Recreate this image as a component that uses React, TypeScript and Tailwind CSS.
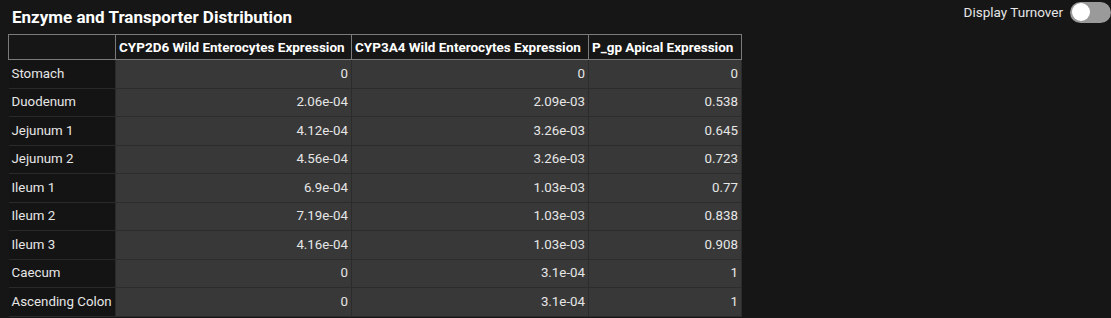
import React, { useState } from "react";

const rows = [
  ["Stomach", "0", "0", "0"],
  ["Duodenum", "2.06e-04", "2.09e-03", "0.538"],
  ["Jejunum 1", "4.12e-04", "3.26e-03", "0.645"],
  ["Jejunum 2", "4.56e-04", "3.26e-03", "0.723"],
  ["Ileum 1", "6.9e-04", "1.03e-03", "0.77"],
  ["Ileum 2", "7.19e-04", "1.03e-03", "0.838"],
  ["Ileum 3", "4.16e-04", "1.03e-03", "0.908"],
  ["Caecum", "0", "3.1e-04", "1"],
  ["Ascending Colon", "0", "3.1e-04", "1"],
];

export default function App() {
  const [turnover, setTurnover] = useState(false);

  return (
    <div
      className="w-[1111px] h-[318px] bg-[#161616] text-[#e6e6e6] overflow-hidden"
      style={{ fontFamily: "Roboto, 'Liberation Sans', sans-serif" }}
    >
      <div className="flex justify-between">
        <h2 className="pl-[12px] pt-[7px] text-[17px] leading-[20px] font-bold text-white">
          Enzyme and Transporter Distribution
        </h2>
        <label className="flex items-center gap-[7px] pt-[2px] h-[22px] text-[13.5px] text-[#e6e6e6]">
          Display Turnover
          <button
            onClick={() => setTurnover(!turnover)}
            className={`w-[41px] h-[21px] rounded-full flex items-center px-[2px] ${
              turnover ? "bg-[#3b82f6] justify-end" : "bg-[#9a9a9a] justify-start"
            }`}
          >
            <span className="w-[18px] h-[18px] rounded-full bg-white" />
          </button>
        </label>
      </div>

      <table className="ml-[8px] mt-[7px] border-collapse text-[13.3px]">
        <thead>
          <tr className="h-[25px] bg-[#161616]">
            <th className="w-[107px] border border-[#7a7a7a]" />
            <th className="w-[236px] border border-[#7a7a7a] px-[3px] text-[13.5px] font-bold text-white text-left whitespace-nowrap">
              CYP2D6 Wild Enterocytes Expression
            </th>
            <th className="w-[237px] border border-[#7a7a7a] px-[3px] text-[13.5px] font-bold text-white text-left whitespace-nowrap">
              CYP3A4 Wild Enterocytes Expression
            </th>
            <th className="w-[153px] border border-[#7a7a7a] px-[3px] text-[13.5px] font-bold text-white text-left whitespace-nowrap">
              P_gp Apical Expression
            </th>
          </tr>
        </thead>
        <tbody>
          {rows.map((r) => (
            <tr key={r[0]} className="h-[28.5px]">
              <td className="border border-[#2a2a2a] border-l-0 bg-[#141414] px-[3px] whitespace-nowrap">
                {r[0]}
              </td>
              {r.slice(1).map((v, i) => (
                <td
                  key={i}
                  className="border border-[#2c2c2c] bg-[#383838] px-[3px] text-right"
                >
                  {v}
                </td>
              ))}
            </tr>
          ))}
        </tbody>
      </table>
    </div>
  );
}
